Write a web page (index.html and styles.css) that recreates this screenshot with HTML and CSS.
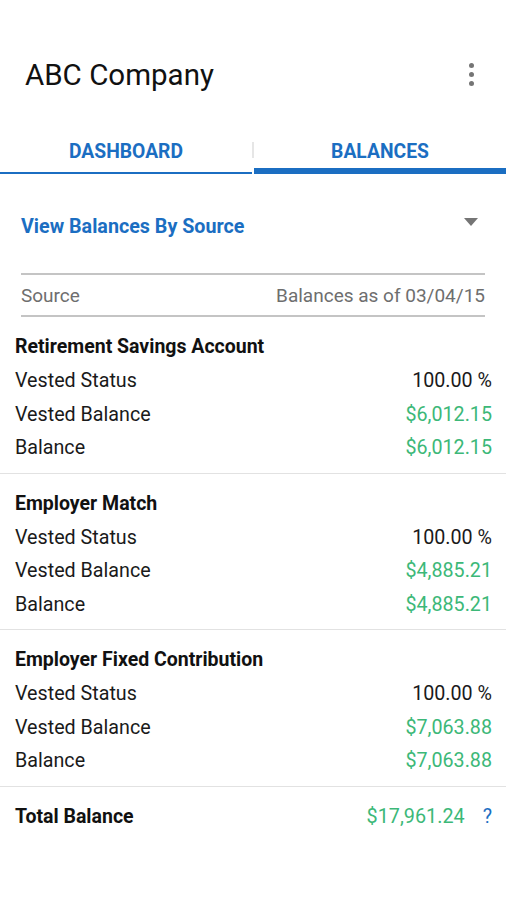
FILE: index.html
```html
<!DOCTYPE html>
<html lang="en">
<head>
    <meta charset="UTF-8">
    <meta name="viewport" content="width=device-width, initial-scale=1.0">
    <title>ABC Company - Balances</title>
    <link rel="stylesheet" href="styles.css">
</head>
<body>

<header class="toolbar">
    <h1>ABC Company</h1>
    <div class="menu-dots">
        <span></span><span></span><span></span>
    </div>
</header>

<nav class="tabs">
    <a href="#" class="tab">DASHBOARD</a>
    <span class="tab-divider"></span>
    <a href="#" class="tab active">BALANCES</a>
</nav>

<section class="picker">
    <div class="picker-row">
        <span class="picker-label">View Balances By Source</span>
        <span class="picker-arrow"></span>
    </div>
    <div class="table-head">
        <span>Source</span>
        <span>Balances as of 03/04/15</span>
    </div>
</section>

<section class="source">
    <h3>Retirement Savings Account</h3>
    <div class="row"><span>Vested Status</span><span>100.00 %</span></div>
    <div class="row"><span>Vested Balance</span><span class="money">$6,012.15</span></div>
    <div class="row"><span>Balance</span><span class="money">$6,012.15</span></div>
</section>

<section class="source">
    <h3>Employer Match</h3>
    <div class="row"><span>Vested Status</span><span>100.00 %</span></div>
    <div class="row"><span>Vested Balance</span><span class="money">$4,885.21</span></div>
    <div class="row"><span>Balance</span><span class="money">$4,885.21</span></div>
</section>

<section class="source">
    <h3>Employer Fixed Contribution</h3>
    <div class="row"><span>Vested Status</span><span>100.00 %</span></div>
    <div class="row"><span>Vested Balance</span><span class="money">$7,063.88</span></div>
    <div class="row"><span>Balance</span><span class="money">$7,063.88</span></div>
</section>

<section class="total">
    <h3>Total Balance</h3>
    <div class="total-value">
        <span class="money">$17,961.24</span>
        <span class="help">?</span>
    </div>
</section>

</body>
</html>
```

FILE: styles.css
```css
body {
    font-family: Roboto, "Noto Sans", Arial, sans-serif;
    margin: 0;
    padding: 0;
    background-color: #fff;
    color: #1a1a1a;
}
.toolbar {
    height: 112px;
    padding: 41px 24px 0 25px;
    box-sizing: border-box;
    display: flex;
    justify-content: space-between;
    align-items: flex-start;
}
.toolbar h1 {
    margin: 0;
    font-size: 29.5px;
    font-weight: 400;
    line-height: 68px;
    color: #111;
}
.menu-dots {
    display: flex;
    flex-direction: column;
    gap: 4px;
    padding-top: 22px;
    padding-right: 8px;
}
.menu-dots span {
    width: 5px;
    height: 5px;
    border-radius: 50%;
    background-color: #757575;
}
.tabs {
    display: flex;
    align-items: flex-start;
    height: 62px;
}
.tab {
    flex: 1;
    height: 62px;
    box-sizing: border-box;
    padding-top: 30px;
    text-align: center;
    color: #1b6ec2;
    text-decoration: none;
    font-size: 19.3px;
    font-weight: 700;
    line-height: 20px;
    box-shadow: inset 0 -2px 0 #1b6ec2;
}
.tab.active {
    box-shadow: inset 0 -6px 0 #1b6ec2;
}
.tab-divider {
    width: 2px;
    height: 16px;
    background-color: #e6e6e6;
    margin-top: 30px;
}
.picker {
    padding: 0 21px;
}
.picker-row {
    display: flex;
    justify-content: space-between;
    align-items: center;
    height: 94px;
    padding-top: 5px;
}
.picker-label {
    font-size: 19.7px;
    font-weight: 700;
    color: #1b6ec2;
}
.picker-arrow {
    width: 0;
    height: 0;
    border-left: 7px solid transparent;
    border-right: 7px solid transparent;
    border-top: 8px solid #757575;
    margin-right: 7px;
    margin-top: -9px;
}
.table-head {
    display: flex;
    justify-content: space-between;
    border-top: 2px solid #c4c4c4;
    border-bottom: 2px solid #c4c4c4;
    height: 44px;
    box-sizing: border-box;
    align-items: center;
    font-size: 19px;
    color: #6e6e6e;
}
.source {
    padding: 12px 14px 8px 15px;
    border-bottom: 1px solid #e2e2e2;
}
.source:first-of-type {
    padding-top: 13px;
}
.source h3,
.total h3 {
    margin: 0;
    font-size: 19.5px;
    font-weight: 700;
    line-height: 34px;
    color: #111;
}
.source h3 {
    padding-top: 1px;
}
.row {
    display: flex;
    justify-content: space-between;
    font-size: 19.7px;
    line-height: 33.5px;
}
.money {
    color: #3cb878;
}
.total {
    display: flex;
    justify-content: space-between;
    align-items: center;
    padding: 13px 14px 0 15px;
}
.total-value {
    display: flex;
    gap: 18px;
    font-size: 19.8px;
}
.help {
    color: #1b6ec2;
}
```
